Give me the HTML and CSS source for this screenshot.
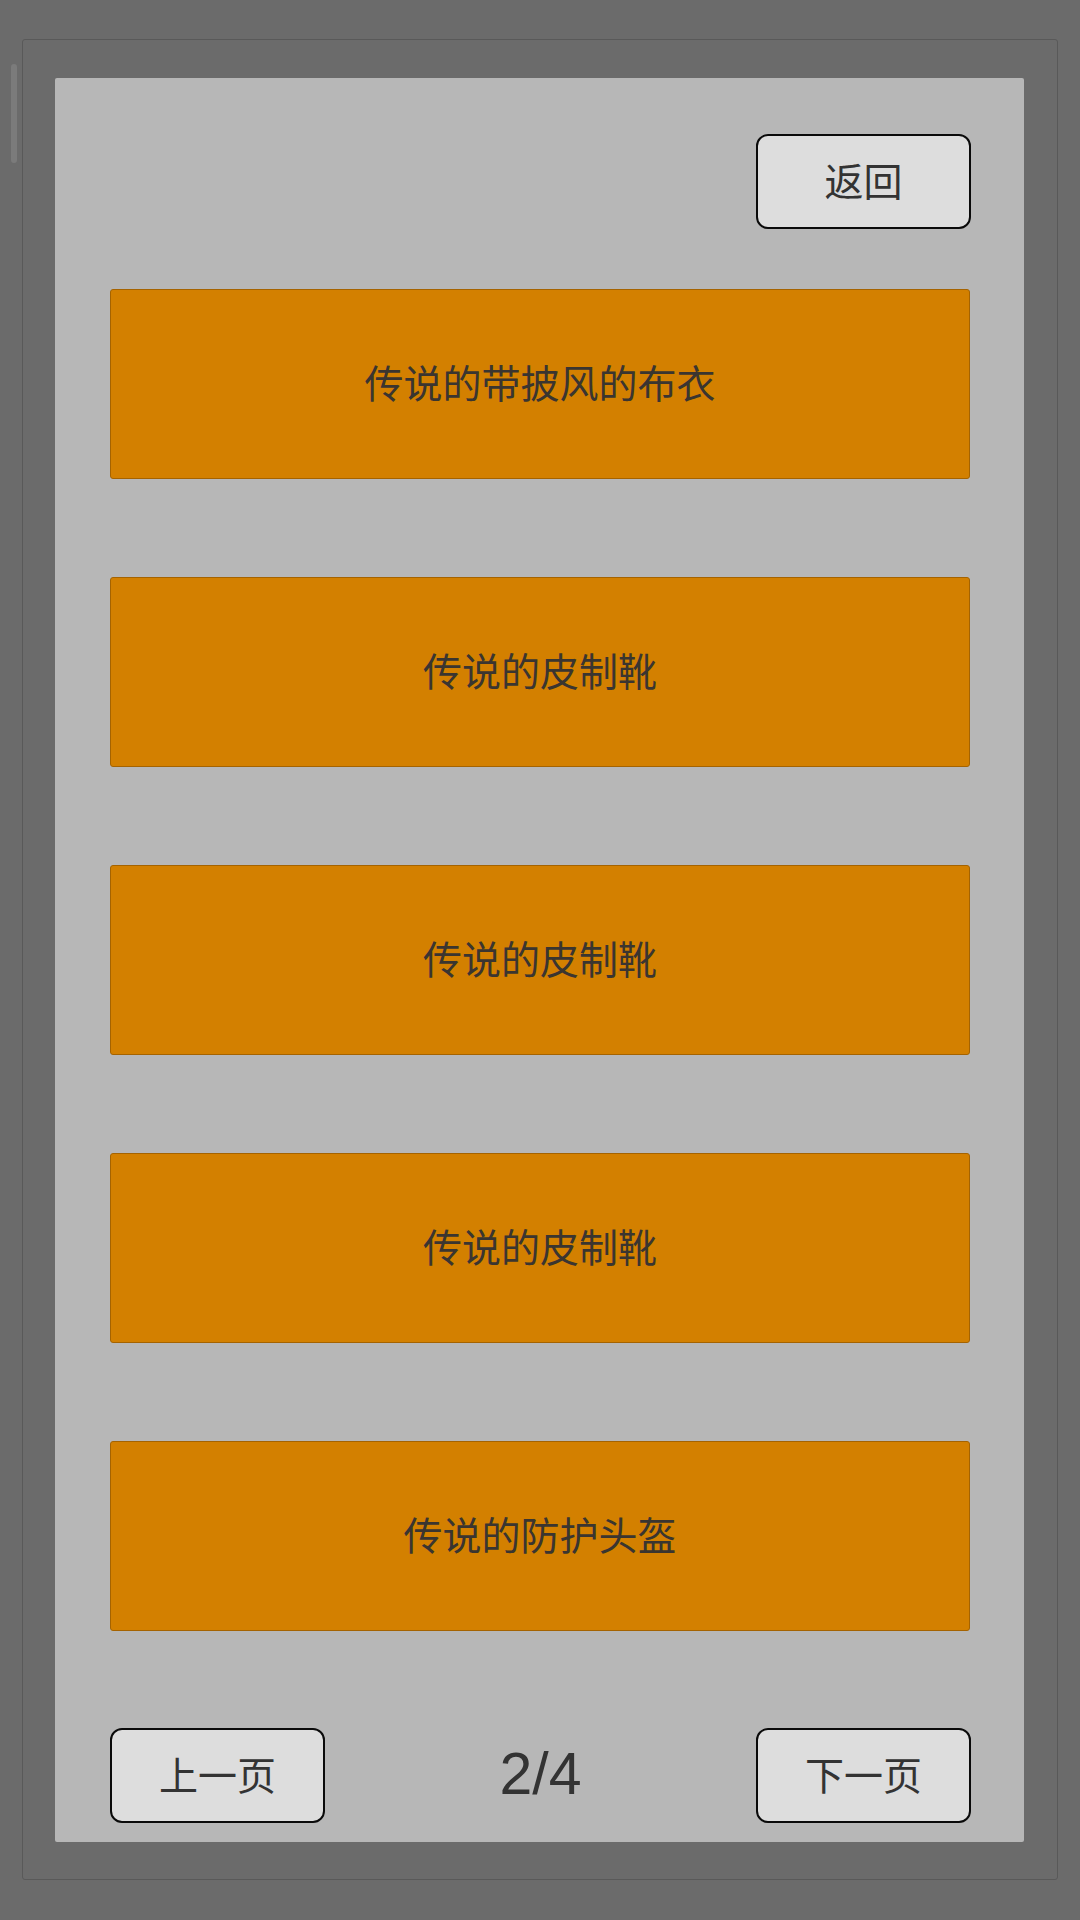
FILE: index.html
```html
<!DOCTYPE html>
<html lang="zh-CN">
<head>
<meta charset="utf-8">
<title>装备列表</title>
<link rel="stylesheet" href="styles.css">
</head>
<body>
<div class="scrollbar"></div>
<div class="frame">
  <div class="panel">
    <div class="top-row">
      <button class="btn">返回</button>
    </div>
    <div class="list">
      <div class="item">传说的带披风的布衣</div>
      <div class="item">传说的皮制靴</div>
      <div class="item">传说的皮制靴</div>
      <div class="item">传说的皮制靴</div>
      <div class="item">传说的防护头盔</div>
    </div>
    <div class="pager">
      <button class="btn">上一页</button>
      <div class="page-num">2/4</div>
      <button class="btn">下一页</button>
    </div>
  </div>
</div>
</body>
</html>
```

FILE: styles.css
```css
* { box-sizing: border-box; }
html, body {
  margin: 0;
  padding: 0;
  width: 1080px;
  height: 1920px;
  background: #6b6b6b;
  font-family: "Noto Sans CJK SC", "Noto Sans", sans-serif;
  overflow: hidden;
}
body {
  padding: 39px 22px 40px 22px;
}
.scrollbar {
  position: absolute;
  left: 11px;
  top: 64px;
  width: 6px;
  height: 99px;
  border-radius: 3px;
  background: #7b7b7b;
}
.frame {
  height: 1841px;
  border: 1px solid #595959;
  border-radius: 3px;
  background: #6b6b6b;
  padding: 38px 33px 37px 32px;
}
.panel {
  height: 100%;
  background: #b7b7b7;
  border-radius: 2px;
  padding: 56px 53px 19px 55px;
  display: flex;
  flex-direction: column;
}
.top-row {
  display: flex;
  justify-content: flex-end;
}
.btn {
  width: 215px;
  height: 95px;
  border: 2px solid #0a0a0a;
  border-radius: 12px;
  background: #dddddd;
  color: #333333;
  font-family: "Noto Sans CJK SC", "Noto Sans", sans-serif;
  font-size: 39px;
  line-height: 1;
  padding: 0 0 5px 0;
  margin: 0;
  display: flex;
  align-items: center;
  justify-content: center;
}
.list {
  margin-top: 60px;
  display: flex;
  flex-direction: column;
  gap: 98px;
  margin-right: 1px;
}
.item {
  height: 190px;
  background: #d38000;
  border: 1px solid #a56300;
  border-radius: 3px;
  display: flex;
  align-items: center;
  justify-content: center;
  color: #3a3530;
  font-size: 39px;
  line-height: 1;
  padding-bottom: 6px;
}
.pager {
  margin-top: auto;
  display: flex;
  align-items: center;
  justify-content: space-between;
}
.page-num {
  font-family: "Liberation Sans", "Noto Sans", sans-serif;
  font-size: 59px;
  line-height: 1;
  color: #333333;
  padding-bottom: 2px;
}
```
